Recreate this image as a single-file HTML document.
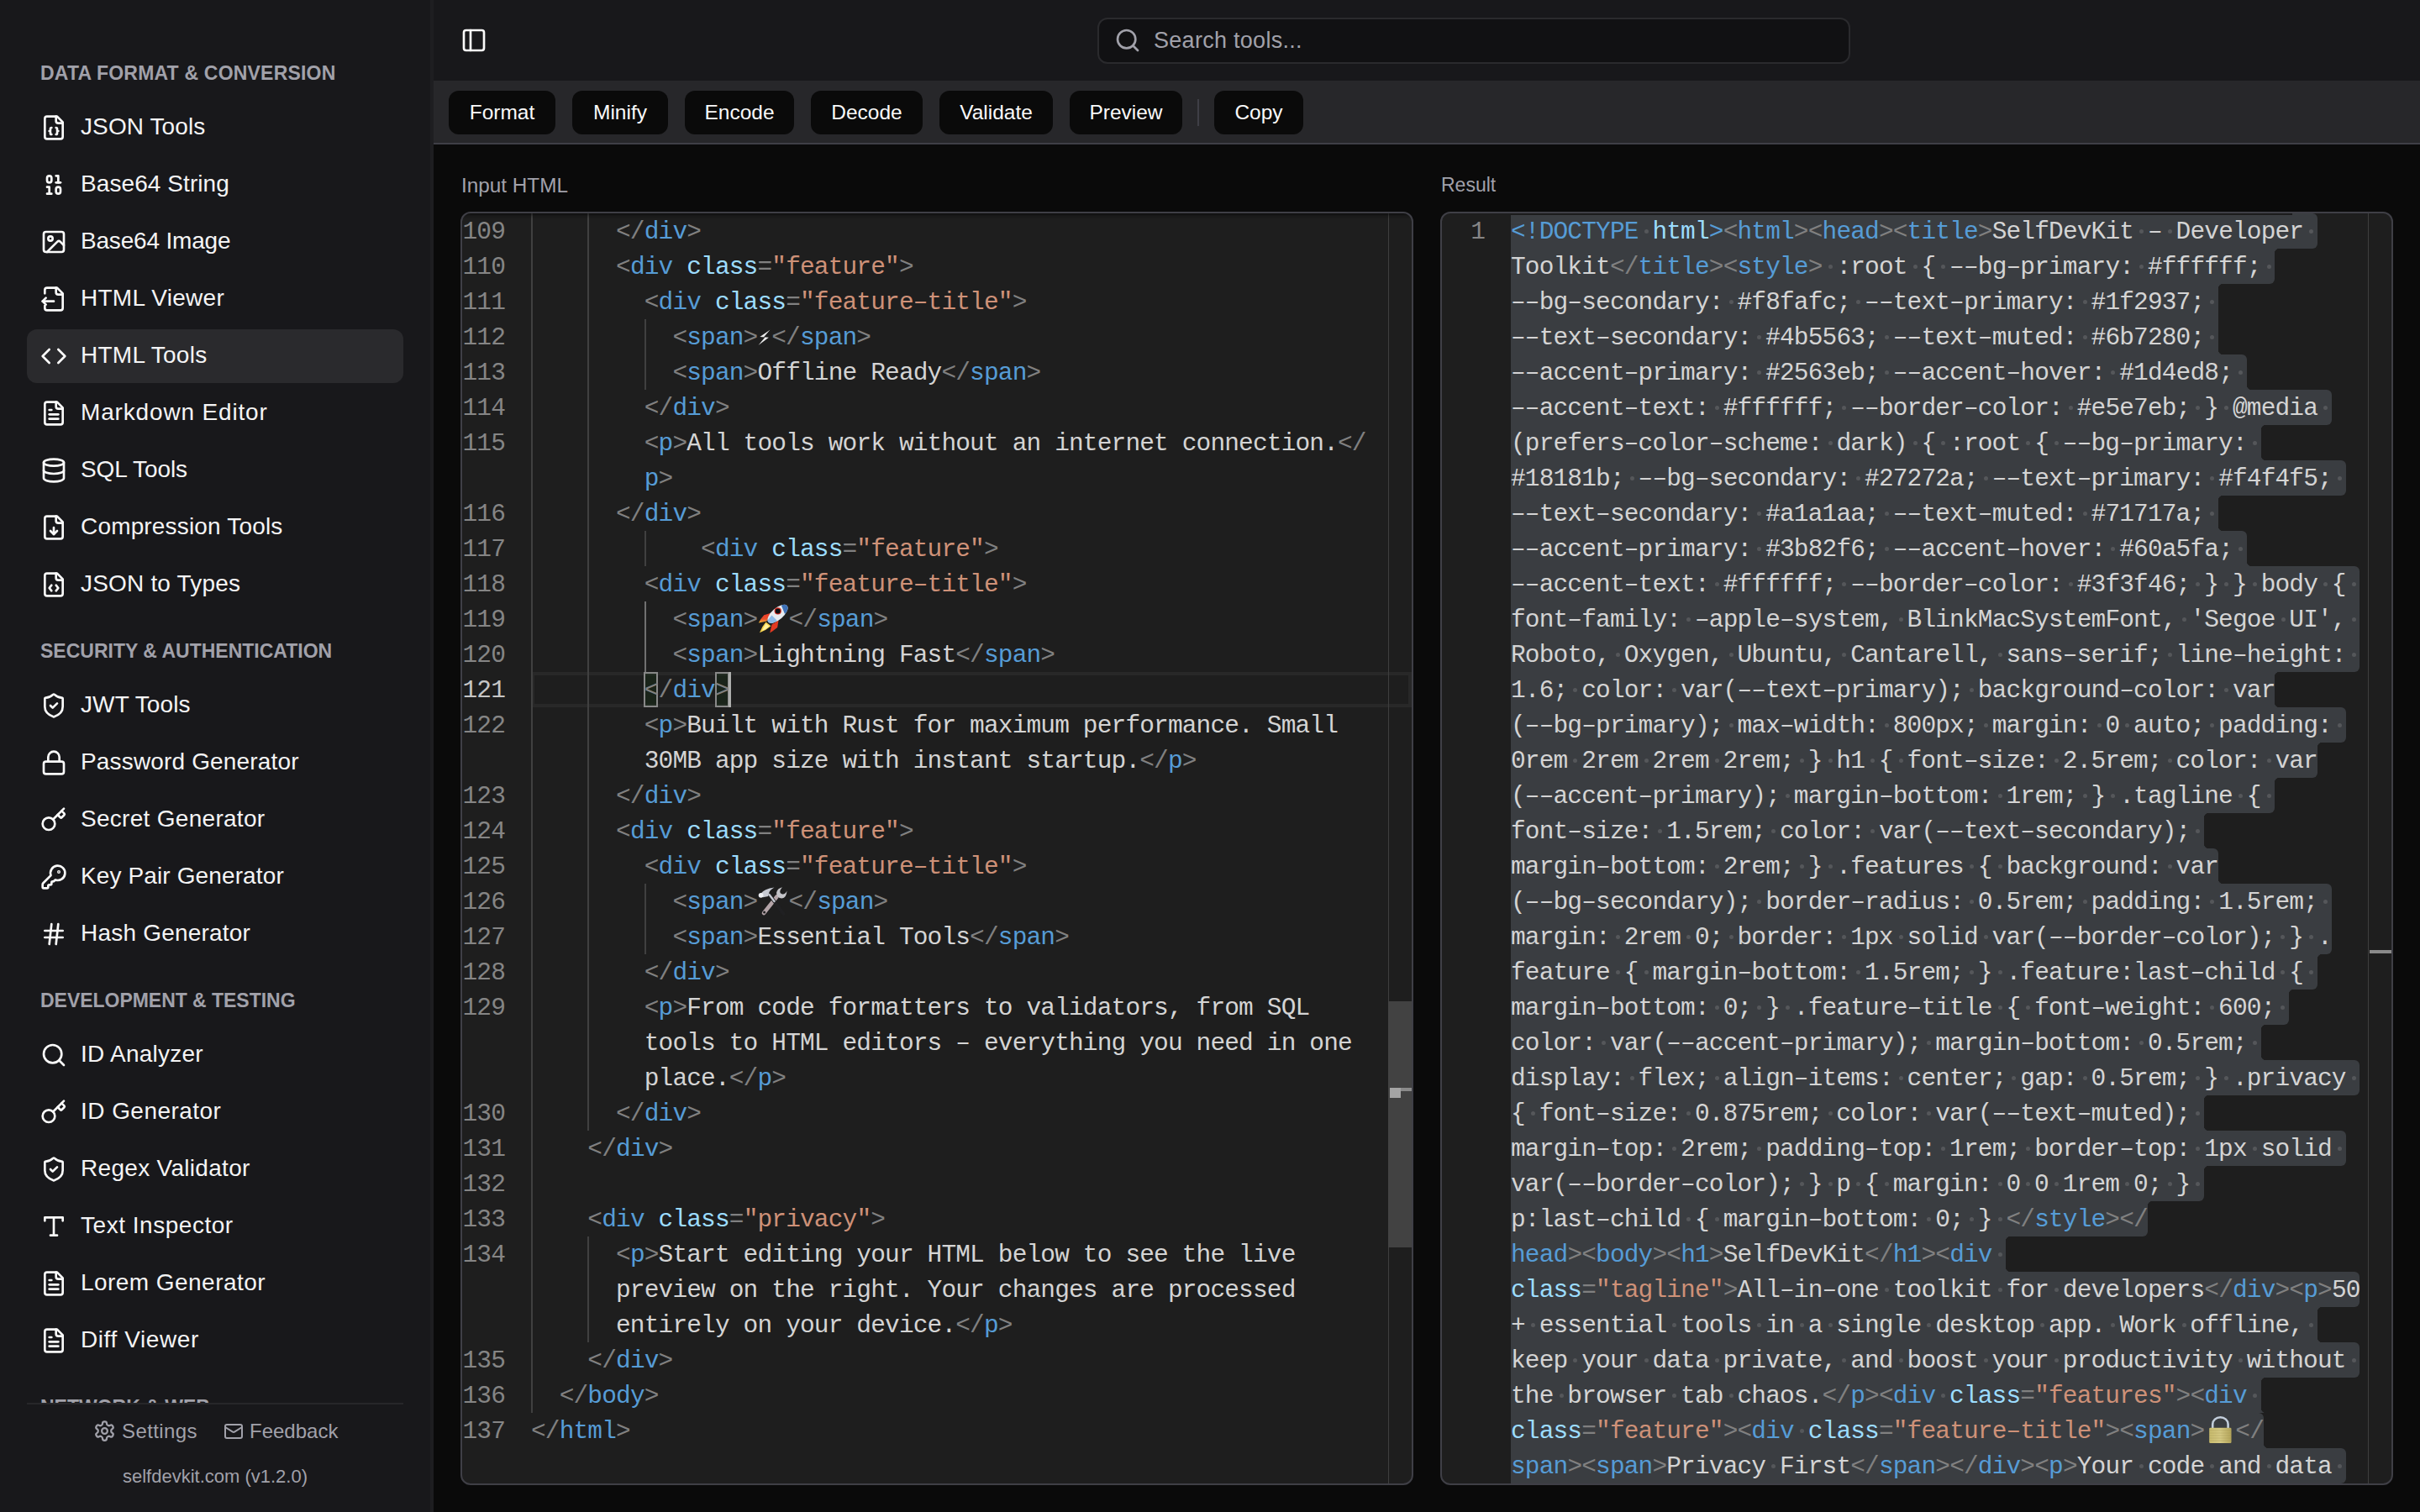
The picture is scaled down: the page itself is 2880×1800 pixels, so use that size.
<!DOCTYPE html>
<html><head><meta charset="utf-8"><title>SelfDevKit</title><style>
*{box-sizing:border-box}
html,body{margin:0;padding:0;width:2880px;height:1800px;overflow:hidden;background:#0a0a0a;font-family:"Liberation Sans",sans-serif}
.ic{position:absolute;display:block}
#sb{position:absolute;left:0;top:0;width:516px;height:1800px;background:#18181b;border-right:4px solid #1e1e21}
#sbscroll{position:absolute;left:0;top:0;width:512px;height:1670px;overflow:hidden}
#sbfoot{position:absolute;left:0;top:1670px;width:512px;height:130px}
#sbfoot:before{content:"";position:absolute;left:32px;top:0;width:448px;height:2px;background:#27272a}
.sh{position:absolute;left:48px;height:30px;line-height:30px;font-size:23px;font-weight:bold;color:#a1a1aa;letter-spacing:0.5px;white-space:nowrap}
.it{position:absolute;left:32px;width:448px;height:64px;border-radius:12px}
.it.sel{background:#2a2a2d}
.itx{position:absolute;left:96px;height:40px;line-height:40px;font-size:28px;color:#f4f4f5;white-space:nowrap}
.ft{position:absolute;height:30px;line-height:30px;font-size:24px;color:#a1a1aa;white-space:nowrap}
.ft2{position:absolute;left:0;width:512px;text-align:center;height:30px;line-height:30px;font-size:22px;color:#a1a1aa;white-space:nowrap}
#hdr{position:absolute;left:516px;top:0;width:2364px;height:96px;background:#18181b}
#search{position:absolute;left:1306px;top:21px;width:896px;height:55px;border:2px solid #2a2a2d;border-radius:12px;background:#111113}
.ph{position:absolute;left:1373px;height:36px;line-height:36px;font-size:27px;letter-spacing:0.28px;color:#a1a1aa;white-space:nowrap}
#tb{position:absolute;left:516px;top:96px;width:2364px;height:76px;background:#27272a;border-bottom:2px solid #3f3f46}
.btn{position:absolute;top:12px;height:52px;line-height:52px;border-radius:12px;background:#0a0a0a;color:#fafafa;font-size:24.5px;text-align:center;white-space:nowrap}
#sep{position:absolute;left:909px;top:22px;width:2px;height:32px;background:#3f3f46}
.label{position:absolute;height:30px;line-height:30px;font-size:24.3px;color:#a1a1aa;white-space:nowrap}
.editor{position:absolute;top:252px;width:1134px;height:1516px;background:#1e1e1e;border:2px solid #3f3f46;border-radius:12px;overflow:hidden}
.row{position:absolute;height:42px;line-height:42px;font-family:"Liberation Mono",monospace;font-size:29.5px;letter-spacing:-0.86px;white-space:pre;color:#d4d4d4}
.ln{position:absolute;left:0;width:51px;text-align:right;height:42px;line-height:42px;font-family:"Liberation Mono",monospace;font-size:29.5px;letter-spacing:-0.86px;color:#858585;white-space:pre}
.ln.cur{color:#c6c6c6}
.row .d{color:#808080}.row .k{color:#569cd6}.row .a{color:#9cdcfe}.row .s{color:#ce9178}.row .t{color:#d4d4d4}
.row .w{display:inline-block;width:16.84px;height:42px;vertical-align:top;position:relative}.row .w:after{content:"";position:absolute;left:7px;top:17.6px;width:5px;height:5px;border-radius:50%;background:#55575a}
.curline{position:absolute;left:82px;width:1048px;height:42px;border:4px solid #282828}
.guide{position:absolute;width:2px;background:#404040}
.bm{position:absolute;width:17px;height:42px;border:2px solid #888;background:rgba(0,100,0,0.1)}
.cursor{position:absolute;width:3px;height:42px;background:#aeafad}
.ovr{position:absolute;left:1102px;top:0;width:1px;height:1516px;background:#3e3e3e}
.thumb{position:absolute;left:1102px;width:28px;background:#424242}
.ovmark{position:absolute;left:1104px;width:27px;height:4px;background:#8a8a8a}.ovcur{position:absolute;left:1104px;width:13px;height:12px;background:#a4a4a4}
.ovmark2{position:absolute;left:1104px;width:27px;height:4px;background:#8a8a8a}
.scrollshadow{position:absolute;left:0;top:0;width:1130px;height:6px;box-shadow:inset 0 6px 6px -6px #000}
.selr{position:absolute;height:42px;background:#3a3d41}.fil{position:absolute;width:6px;height:6px}
.emo1{display:inline-block;width:16.84px;height:42px;vertical-align:top;position:relative}
.emo{display:inline-block;width:37px;height:42px;vertical-align:top;position:relative}
</style></head><body>
<div id="sb"><div id="sbscroll"><div class="sh" style="top:72.0px;letter-spacing:0.2px">DATA FORMAT &amp; CONVERSION</div><div class="it" style="top:120.0px"></div><svg class="ic" style="left:48px;top:136px;width:32px;height:32px" viewBox="0 0 24 24" fill="none" stroke="#fafafa" stroke-width="2" stroke-linecap="round" stroke-linejoin="round"><path d="M15 2H6a2 2 0 0 0-2 2v16a2 2 0 0 0 2 2h12a2 2 0 0 0 2-2V7Z"/><path d="M14 2v4a2 2 0 0 0 2 2h4"/><path d="M10 12a1 1 0 0 0-1 1v1a1 1 0 0 1-1 1 1 1 0 0 1 1 1v1a1 1 0 0 0 1 1"/><path d="M14 18a1 1 0 0 0 1-1v-1a1 1 0 0 1 1-1 1 1 0 0 1-1-1v-1a1 1 0 0 0-1-1"/></svg><div class="itx" style="top:130.8px;letter-spacing:0.10px">JSON Tools</div><div class="it" style="top:188.0px"></div><svg class="ic" style="left:48px;top:204px;width:32px;height:32px" viewBox="0 0 24 24" fill="none" stroke="#fafafa" stroke-width="2" stroke-linecap="round" stroke-linejoin="round"><rect x="14" y="14" width="4" height="6" rx="2"/><rect x="6" y="4" width="4" height="6" rx="2"/><path d="M6 20h4"/><path d="M14 10h4"/><path d="M6 14h2v6"/><path d="M14 4h2v6"/></svg><div class="itx" style="top:198.8px;letter-spacing:0.08px">Base64 String</div><div class="it" style="top:256.0px"></div><svg class="ic" style="left:48px;top:272px;width:32px;height:32px" viewBox="0 0 24 24" fill="none" stroke="#fafafa" stroke-width="2" stroke-linecap="round" stroke-linejoin="round"><rect width="18" height="18" x="3" y="3" rx="2" ry="2"/><circle cx="9" cy="9" r="2"/><path d="m21 15-3.086-3.086a2 2 0 0 0-2.828 0L6 21"/></svg><div class="itx" style="top:266.8px;letter-spacing:-0.19px">Base64 Image</div><div class="it" style="top:324.0px"></div><svg class="ic" style="left:48px;top:340px;width:32px;height:32px" viewBox="0 0 24 24" fill="none" stroke="#fafafa" stroke-width="2" stroke-linecap="round" stroke-linejoin="round"><path d="M14 2v4a2 2 0 0 0 2 2h4"/><path d="M4 7V4a2 2 0 0 1 2-2h9l5 5v13a2 2 0 0 1-2 2H6a2 2 0 0 1-2-2v-2"/><path d="m5 11-3 3"/><path d="m5 17-3-3h10"/></svg><div class="itx" style="top:334.8px;letter-spacing:0.27px">HTML Viewer</div><div class="it sel" style="top:392.0px"></div><svg class="ic" style="left:48px;top:408px;width:32px;height:32px" viewBox="0 0 24 24" fill="none" stroke="#fafafa" stroke-width="2" stroke-linecap="round" stroke-linejoin="round"><polyline points="16 18 22 12 16 6"/><polyline points="8 6 2 12 8 18"/></svg><div class="itx" style="top:402.8px;letter-spacing:0.26px">HTML Tools</div><div class="it" style="top:460.0px"></div><svg class="ic" style="left:48px;top:476px;width:32px;height:32px" viewBox="0 0 24 24" fill="none" stroke="#fafafa" stroke-width="2" stroke-linecap="round" stroke-linejoin="round"><path d="M15 2H6a2 2 0 0 0-2 2v16a2 2 0 0 0 2 2h12a2 2 0 0 0 2-2V7Z"/><path d="M14 2v4a2 2 0 0 0 2 2h4"/><path d="M10 9H8"/><path d="M16 13H8"/><path d="M16 17H8"/></svg><div class="itx" style="top:470.8px;letter-spacing:0.84px">Markdown Editor</div><div class="it" style="top:528.0px"></div><svg class="ic" style="left:48px;top:544px;width:32px;height:32px" viewBox="0 0 24 24" fill="none" stroke="#fafafa" stroke-width="2" stroke-linecap="round" stroke-linejoin="round"><ellipse cx="12" cy="5" rx="9" ry="3"/><path d="M3 5V19A9 3 0 0 0 21 19V5"/><path d="M3 12A9 3 0 0 0 21 12"/></svg><div class="itx" style="top:538.8px;letter-spacing:-0.07px">SQL Tools</div><div class="it" style="top:596.0px"></div><svg class="ic" style="left:48px;top:612px;width:32px;height:32px" viewBox="0 0 24 24" fill="none" stroke="#fafafa" stroke-width="2" stroke-linecap="round" stroke-linejoin="round"><path d="M15 2H6a2 2 0 0 0-2 2v16a2 2 0 0 0 2 2h12a2 2 0 0 0 2-2V7Z"/><path d="M14 2v4a2 2 0 0 0 2 2h4"/><path d="M12 18v-6"/><path d="m9 15 3 3 3-3"/></svg><div class="itx" style="top:606.8px;letter-spacing:0.17px">Compression Tools</div><div class="it" style="top:664.0px"></div><svg class="ic" style="left:48px;top:680px;width:32px;height:32px" viewBox="0 0 24 24" fill="none" stroke="#fafafa" stroke-width="2" stroke-linecap="round" stroke-linejoin="round"><path d="M10 12.5 8 15l2 2.5"/><path d="m14 12.5 2 2.5-2 2.5"/><path d="M14 2v4a2 2 0 0 0 2 2h4"/><path d="M15 2H6a2 2 0 0 0-2 2v16a2 2 0 0 0 2 2h12a2 2 0 0 0 2-2V7z"/></svg><div class="itx" style="top:674.8px;letter-spacing:0.19px">JSON to Types</div><div class="sh" style="top:760.0px;letter-spacing:0.0px">SECURITY &amp; AUTHENTICATION</div><div class="it" style="top:808.0px"></div><svg class="ic" style="left:48px;top:824px;width:32px;height:32px" viewBox="0 0 24 24" fill="none" stroke="#fafafa" stroke-width="2" stroke-linecap="round" stroke-linejoin="round"><path d="M20 13c0 5-3.5 7.5-7.66 8.95a1 1 0 0 1-.67-.01C7.5 20.5 4 18 4 13V6a1 1 0 0 1 1-1c2 0 4.5-1.2 6.24-2.72a1.17 1.17 0 0 1 1.52 0C14.51 3.81 17 5 19 5a1 1 0 0 1 1 1z"/><path d="m9 12 2 2 4-4"/></svg><div class="itx" style="top:818.8px;letter-spacing:0.10px">JWT Tools</div><div class="it" style="top:876.0px"></div><svg class="ic" style="left:48px;top:892px;width:32px;height:32px" viewBox="0 0 24 24" fill="none" stroke="#fafafa" stroke-width="2" stroke-linecap="round" stroke-linejoin="round"><rect width="18" height="11" x="3" y="11" rx="2" ry="2"/><path d="M7 11V7a5 5 0 0 1 10 0v4"/></svg><div class="itx" style="top:886.8px;letter-spacing:0.16px">Password Generator</div><div class="it" style="top:944.0px"></div><svg class="ic" style="left:48px;top:960px;width:32px;height:32px" viewBox="0 0 24 24" fill="none" stroke="#fafafa" stroke-width="2" stroke-linecap="round" stroke-linejoin="round"><path d="m15.5 7.5 2.3 2.3a1 1 0 0 0 1.4 0l2.1-2.1a1 1 0 0 0 0-1.4L19 4"/><path d="m21 2-9.6 9.6"/><circle cx="7.5" cy="15.5" r="5.5"/></svg><div class="itx" style="top:954.8px;letter-spacing:0.29px">Secret Generator</div><div class="it" style="top:1012.0px"></div><svg class="ic" style="left:48px;top:1028px;width:32px;height:32px" viewBox="0 0 24 24" fill="none" stroke="#fafafa" stroke-width="2" stroke-linecap="round" stroke-linejoin="round"><path d="M2.586 17.414A2 2 0 0 0 2 18.828V21a1 1 0 0 0 1 1h3a1 1 0 0 0 1-1v-1a1 1 0 0 1 1-1h1a1 1 0 0 0 1-1v-1a1 1 0 0 1 1-1h.172a2 2 0 0 0 1.414-.586l.814-.814a6.5 6.5 0 1 0-4-4z"/><circle cx="16.5" cy="7.5" r=".5" fill="currentColor"/></svg><div class="itx" style="top:1022.8px;letter-spacing:0.12px">Key Pair Generator</div><div class="it" style="top:1080.0px"></div><svg class="ic" style="left:48px;top:1096px;width:32px;height:32px" viewBox="0 0 24 24" fill="none" stroke="#fafafa" stroke-width="2" stroke-linecap="round" stroke-linejoin="round"><line x1="4" x2="20" y1="9" y2="9"/><line x1="4" x2="20" y1="15" y2="15"/><line x1="10" x2="8" y1="3" y2="21"/><line x1="16" x2="14" y1="3" y2="21"/></svg><div class="itx" style="top:1090.8px;letter-spacing:0.21px">Hash Generator</div><div class="sh" style="top:1176.0px;letter-spacing:-0.03px">DEVELOPMENT &amp; TESTING</div><div class="it" style="top:1224.0px"></div><svg class="ic" style="left:48px;top:1240px;width:32px;height:32px" viewBox="0 0 24 24" fill="none" stroke="#fafafa" stroke-width="2" stroke-linecap="round" stroke-linejoin="round"><circle cx="11" cy="11" r="8"/><path d="m21 21-4.3-4.3"/></svg><div class="itx" style="top:1234.8px;letter-spacing:0.25px">ID Analyzer</div><div class="it" style="top:1292.0px"></div><svg class="ic" style="left:48px;top:1308px;width:32px;height:32px" viewBox="0 0 24 24" fill="none" stroke="#fafafa" stroke-width="2" stroke-linecap="round" stroke-linejoin="round"><path d="m15.5 7.5 2.3 2.3a1 1 0 0 0 1.4 0l2.1-2.1a1 1 0 0 0 0-1.4L19 4"/><path d="m21 2-9.6 9.6"/><circle cx="7.5" cy="15.5" r="5.5"/></svg><div class="itx" style="top:1302.8px;letter-spacing:0.45px">ID Generator</div><div class="it" style="top:1360.0px"></div><svg class="ic" style="left:48px;top:1376px;width:32px;height:32px" viewBox="0 0 24 24" fill="none" stroke="#fafafa" stroke-width="2" stroke-linecap="round" stroke-linejoin="round"><path d="M20 13c0 5-3.5 7.5-7.66 8.95a1 1 0 0 1-.67-.01C7.5 20.5 4 18 4 13V6a1 1 0 0 1 1-1c2 0 4.5-1.2 6.24-2.72a1.17 1.17 0 0 1 1.52 0C14.51 3.81 17 5 19 5a1 1 0 0 1 1 1z"/><path d="m9 12 2 2 4-4"/></svg><div class="itx" style="top:1370.8px;letter-spacing:0.30px">Regex Validator</div><div class="it" style="top:1428.0px"></div><svg class="ic" style="left:48px;top:1444px;width:32px;height:32px" viewBox="0 0 24 24" fill="none" stroke="#fafafa" stroke-width="2" stroke-linecap="round" stroke-linejoin="round"><polyline points="4 7 4 4 20 4 20 7"/><line x1="9" x2="15" y1="20" y2="20"/><line x1="12" x2="12" y1="4" y2="20"/></svg><div class="itx" style="top:1438.8px;letter-spacing:0.53px">Text Inspector</div><div class="it" style="top:1496.0px"></div><svg class="ic" style="left:48px;top:1512px;width:32px;height:32px" viewBox="0 0 24 24" fill="none" stroke="#fafafa" stroke-width="2" stroke-linecap="round" stroke-linejoin="round"><path d="M15 2H6a2 2 0 0 0-2 2v16a2 2 0 0 0 2 2h12a2 2 0 0 0 2-2V7Z"/><path d="M14 2v4a2 2 0 0 0 2 2h4"/><path d="M10 9H8"/><path d="M16 13H8"/><path d="M16 17H8"/></svg><div class="itx" style="top:1506.8px;letter-spacing:0.45px">Lorem Generator</div><div class="it" style="top:1564.0px"></div><svg class="ic" style="left:48px;top:1580px;width:32px;height:32px" viewBox="0 0 24 24" fill="none" stroke="#fafafa" stroke-width="2" stroke-linecap="round" stroke-linejoin="round"><path d="M15 2H6a2 2 0 0 0-2 2v16a2 2 0 0 0 2 2h12a2 2 0 0 0 2-2V7Z"/><path d="M14 2v4a2 2 0 0 0 2 2h4"/><path d="M10 9H8"/><path d="M16 13H8"/><path d="M16 17H8"/></svg><div class="itx" style="top:1574.8px;letter-spacing:0.59px">Diff Viewer</div><div class="sh" style="top:1660.0px;letter-spacing:0px">NETWORK &amp; WEB</div></div><div id="sbfoot"><svg class="ic" style="left:110.5px;top:19.5px;width:27px;height:27px" viewBox="0 0 24 24" fill="none" stroke="#a1a1aa" stroke-width="2" stroke-linecap="round" stroke-linejoin="round"><path d="M12.22 2h-.44a2 2 0 0 0-2 2v.18a2 2 0 0 1-1 1.73l-.43.25a2 2 0 0 1-2 0l-.15-.08a2 2 0 0 0-2.73.73l-.22.38a2 2 0 0 0 .73 2.73l.15.1a2 2 0 0 1 1 1.72v.51a2 2 0 0 1-1 1.74l-.15.09a2 2 0 0 0-.73 2.73l.22.38a2 2 0 0 0 2.730.73l.15-.08a2 2 0 0 1 2 0l.43.25a2 2 0 0 1 1 1.73V20a2 2 0 0 0 2 2h.44a2 2 0 0 0 2-2v-.18a2 2 0 0 1 1-1.73l.43-.25a2 2 0 0 1 2 0l.15.08a2 2 0 0 0 2.73-.73l.22-.39a2 2 0 0 0-.73-2.73l-.15-.08a2 2 0 0 1-1-1.74v-.5a2 2 0 0 1 1-1.74l.15-.09a2 2 0 0 0 .73-2.73l-.22-.38a2 2 0 0 0-2.73-.73l-.15.08a2 2 0 0 1-2 0l-.43-.25a2 2 0 0 1-1-1.73V4a2 2 0 0 0-2-2z"/><circle cx="12" cy="12" r="3"/></svg><div class="ft" style="left:145px;top:18.9px;letter-spacing:0.4px">Settings</div><svg class="ic" style="left:266px;top:22px;width:24px;height:24px" viewBox="0 0 24 24" fill="none" stroke="#a1a1aa" stroke-width="2" stroke-linecap="round" stroke-linejoin="round"><rect width="20" height="16" x="2" y="4" rx="2"/><path d="m22 7-8.97 5.7a1.94 1.94 0 0 1-2.06 0L2 7"/></svg><div class="ft" style="left:297px;top:18.9px">Feedback</div><div class="ft2" style="top:73.2px">selfdevkit.com (v1.2.0)</div></div></div>
<div id="hdr"></div>
<div id="tb"><div class="btn" style="left:18px;width:127px">Format</div><div class="btn" style="left:165px;width:114px">Minify</div><div class="btn" style="left:299px;width:130px">Encode</div><div class="btn" style="left:449px;width:133px">Decode</div><div class="btn" style="left:602px;width:135px">Validate</div><div class="btn" style="left:757px;width:134px">Preview</div><div class="btn" style="left:929px;width:106px">Copy</div><div id="sep"></div></div>
<svg class="ic" style="left:548px;top:32px;width:32px;height:32px" viewBox="0 0 24 24" fill="none" stroke="#fafafa" stroke-width="2" stroke-linecap="round" stroke-linejoin="round"><rect width="18" height="18" x="3" y="3" rx="2"/><path d="M9 3v18"/></svg><div id="search"></div><svg class="ic" style="left:1326px;top:32px;width:32px;height:32px" viewBox="0 0 24 24" fill="none" stroke="#a1a1aa" stroke-width="2" stroke-linecap="round" stroke-linejoin="round"><circle cx="11" cy="11" r="8"/><path d="m21 21-4.3-4.3"/></svg><div class="ph" style="top:29.6px">Search tools...</div>
<div id="main"><div class="label" style="left:549px;top:205.7px">Input HTML</div><div class="editor" style="left:548px"><div class="curline" style="top:546px"></div><div class="guide" style="left:82.0px;top:0px;height:1428px"></div><div class="guide" style="left:149.4px;top:0px;height:1092px"></div><div class="guide" style="left:149.4px;top:1218px;height:126px"></div><div class="guide" style="left:216.7px;top:126px;height:84px"></div><div class="guide" style="left:216.7px;top:378px;height:42px"></div><div class="guide" style="left:216.7px;top:462px;height:84px;background:#707070"></div><div class="guide" style="left:216.7px;top:798px;height:84px"></div><div class="bm" style="left:215.7px;top:546px"></div><div class="bm" style="left:300.9px;top:546px"></div><div class="ln" style="top:1px">109</div><div class="row" style="top:1px;left:183.04px"><span class="d">&lt;/</span><span class="k">div</span><span class="d">&gt;</span></div><div class="ln" style="top:43px">110</div><div class="row" style="top:43px;left:183.04px"><span class="d">&lt;</span><span class="k">div</span><span class="t"> </span><span class="a">class</span><span class="d">=</span><span class="s">"feature"</span><span class="d">&gt;</span></div><div class="ln" style="top:85px">111</div><div class="row" style="top:85px;left:216.72px"><span class="d">&lt;</span><span class="k">div</span><span class="t"> </span><span class="a">class</span><span class="d">=</span><span class="s">"feature–title"</span><span class="d">&gt;</span></div><div class="ln" style="top:127px">112</div><div class="row" style="top:127px;left:250.40px"><span class="d">&lt;</span><span class="k">span</span><span class="d">&gt;</span><span class="t"><span class="emo1"><svg width="17" height="42" viewBox="0 0 17 42" style="position:absolute;left:0;top:0"><path d="M15.3 11.8 L3.3 19.9 L9.4 20.4 L1.5 29.9 L13.9 20.8 L8.0 20.3 Z" fill="#ececec"/></svg></span></span><span class="d">&lt;/</span><span class="k">span</span><span class="d">&gt;</span></div><div class="ln" style="top:169px">113</div><div class="row" style="top:169px;left:250.40px"><span class="d">&lt;</span><span class="k">span</span><span class="d">&gt;</span><span class="t">Offline Ready</span><span class="d">&lt;/</span><span class="k">span</span><span class="d">&gt;</span></div><div class="ln" style="top:211px">114</div><div class="row" style="top:211px;left:216.72px"><span class="d">&lt;/</span><span class="k">div</span><span class="d">&gt;</span></div><div class="ln" style="top:253px">115</div><div class="row" style="top:253px;left:216.72px"><span class="d">&lt;</span><span class="k">p</span><span class="d">&gt;</span><span class="t">All tools work without an internet connection.</span><span class="d">&lt;/</span></div><div class="row" style="top:295px;left:216.72px"><span class="k">p</span><span class="d">&gt;</span></div><div class="ln" style="top:337px">116</div><div class="row" style="top:337px;left:183.04px"><span class="d">&lt;/</span><span class="k">div</span><span class="d">&gt;</span></div><div class="ln" style="top:379px">117</div><div class="row" style="top:379px;left:284.08px"><span class="d">&lt;</span><span class="k">div</span><span class="t"> </span><span class="a">class</span><span class="d">=</span><span class="s">"feature"</span><span class="d">&gt;</span></div><div class="ln" style="top:421px">118</div><div class="row" style="top:421px;left:216.72px"><span class="d">&lt;</span><span class="k">div</span><span class="t"> </span><span class="a">class</span><span class="d">=</span><span class="s">"feature–title"</span><span class="d">&gt;</span></div><div class="ln" style="top:463px">119</div><div class="row" style="top:463px;left:250.40px"><span class="d">&lt;</span><span class="k">span</span><span class="d">&gt;</span><span class="t"><span class="emo"><svg width="37" height="42" viewBox="0 0 37 42" style="position:absolute;left:0;top:0"><defs><clipPath id="rb"><ellipse cx="24.5" cy="13.8" rx="14.8" ry="6.9" transform="rotate(-41 24.5 13.8)"/></clipPath><linearGradient id="rf" x1="0" y1="0" x2="0" y2="1"><stop offset="0" stop-color="#f0382a"/><stop offset="0.6" stop-color="#e8502a"/><stop offset="1" stop-color="#f5c33a"/></linearGradient></defs><path d="M16.5 12.8 L8.2 15.2 Q4.2 19.5 1.8 24.6 L11.5 22.5 Z" fill="url(#rf)"/><path d="M25.5 21.5 L24.2 30 Q19.5 33.8 15.2 36.5 L17.5 26.5 Z" fill="#e23a22"/><path d="M10.5 23.5 Q5.5 29 3 36.2 Q10.5 33.5 16.5 28.2 Z" fill="#f6d24a"/><path d="M10.5 25.5 Q7.5 30 6 34 Q11 32 14.5 28.5 Z" fill="#fff3a0"/><g clip-path="url(#rb)"><rect x="0" y="0" width="37" height="42" fill="#e6ebf0"/><path d="M5 30 L17.5 15.5 L23.5 21.5 L11 36 Z" fill="#8dbbe8"/><path d="M32 0 L40 8 L33 14 L29 4 Z" fill="#3f72b8"/></g><circle cx="24.7" cy="10.4" r="4.1" fill="#d4291c"/><circle cx="24.7" cy="10.4" r="3" fill="#0c1014"/></svg></span></span><span class="d">&lt;/</span><span class="k">span</span><span class="d">&gt;</span></div><div class="ln" style="top:505px">120</div><div class="row" style="top:505px;left:250.40px"><span class="d">&lt;</span><span class="k">span</span><span class="d">&gt;</span><span class="t">Lightning Fast</span><span class="d">&lt;/</span><span class="k">span</span><span class="d">&gt;</span></div><div class="ln cur" style="top:547px">121</div><div class="row" style="top:547px;left:216.72px"><span class="d">&lt;/</span><span class="k">div</span><span class="d">&gt;</span></div><div class="ln" style="top:589px">122</div><div class="row" style="top:589px;left:216.72px"><span class="d">&lt;</span><span class="k">p</span><span class="d">&gt;</span><span class="t">Built with Rust for maximum performance. Small </span></div><div class="row" style="top:631px;left:216.72px"><span class="t">30MB app size with instant startup.</span><span class="d">&lt;/</span><span class="k">p</span><span class="d">&gt;</span></div><div class="ln" style="top:673px">123</div><div class="row" style="top:673px;left:183.04px"><span class="d">&lt;/</span><span class="k">div</span><span class="d">&gt;</span></div><div class="ln" style="top:715px">124</div><div class="row" style="top:715px;left:183.04px"><span class="d">&lt;</span><span class="k">div</span><span class="t"> </span><span class="a">class</span><span class="d">=</span><span class="s">"feature"</span><span class="d">&gt;</span></div><div class="ln" style="top:757px">125</div><div class="row" style="top:757px;left:216.72px"><span class="d">&lt;</span><span class="k">div</span><span class="t"> </span><span class="a">class</span><span class="d">=</span><span class="s">"feature–title"</span><span class="d">&gt;</span></div><div class="ln" style="top:799px">126</div><div class="row" style="top:799px;left:250.40px"><span class="d">&lt;</span><span class="k">span</span><span class="d">&gt;</span><span class="t"><span class="emo"><svg width="37" height="42" viewBox="0 0 37 42" style="position:absolute;left:0;top:0"><path d="M23.5 14.5 L8 34" stroke="#b4a4a8" stroke-width="4.6" stroke-linecap="round"/><circle cx="8.6" cy="33" r="1.5" fill="#1e1e1e"/><path d="M14.5 12 L31.5 35" stroke="#202022" stroke-width="4" stroke-linecap="round"/><path d="M14.5 12 L20.5 20" stroke="#c4c8d0" stroke-width="2.4" stroke-linecap="round"/><path d="M30 3.2 Q24 4.5 23 10 Q23.5 16 29.5 16.5 Q35 16 35.5 7.6 Q33.5 12 30 11.5 Q26.5 10.5 27.5 7 Q28.5 5 30 3.2 Z" fill="#c4c4c8"/><path d="M3.5 11.5 Q8.5 5 20.5 3.6 Q14.5 6.8 14 10.8 L13.2 14 L7 15.2 Z" fill="#c6c9d2"/><circle cx="4.6" cy="12.8" r="2.9" fill="#eef0f4"/></svg></span></span><span class="d">&lt;/</span><span class="k">span</span><span class="d">&gt;</span></div><div class="ln" style="top:841px">127</div><div class="row" style="top:841px;left:250.40px"><span class="d">&lt;</span><span class="k">span</span><span class="d">&gt;</span><span class="t">Essential Tools</span><span class="d">&lt;/</span><span class="k">span</span><span class="d">&gt;</span></div><div class="ln" style="top:883px">128</div><div class="row" style="top:883px;left:216.72px"><span class="d">&lt;/</span><span class="k">div</span><span class="d">&gt;</span></div><div class="ln" style="top:925px">129</div><div class="row" style="top:925px;left:216.72px"><span class="d">&lt;</span><span class="k">p</span><span class="d">&gt;</span><span class="t">From code formatters to validators, from SQL </span></div><div class="row" style="top:967px;left:216.72px"><span class="t">tools to HTML editors – everything you need in one </span></div><div class="row" style="top:1009px;left:216.72px"><span class="t">place.</span><span class="d">&lt;/</span><span class="k">p</span><span class="d">&gt;</span></div><div class="ln" style="top:1051px">130</div><div class="row" style="top:1051px;left:183.04px"><span class="d">&lt;/</span><span class="k">div</span><span class="d">&gt;</span></div><div class="ln" style="top:1093px">131</div><div class="row" style="top:1093px;left:149.36px"><span class="d">&lt;/</span><span class="k">div</span><span class="d">&gt;</span></div><div class="ln" style="top:1135px">132</div><div class="row" style="top:1135px;left:82.00px"></div><div class="ln" style="top:1177px">133</div><div class="row" style="top:1177px;left:149.36px"><span class="d">&lt;</span><span class="k">div</span><span class="t"> </span><span class="a">class</span><span class="d">=</span><span class="s">"privacy"</span><span class="d">&gt;</span></div><div class="ln" style="top:1219px">134</div><div class="row" style="top:1219px;left:183.04px"><span class="d">&lt;</span><span class="k">p</span><span class="d">&gt;</span><span class="t">Start editing your HTML below to see the live </span></div><div class="row" style="top:1261px;left:183.04px"><span class="t">preview on the right. Your changes are processed </span></div><div class="row" style="top:1303px;left:183.04px"><span class="t">entirely on your device.</span><span class="d">&lt;/</span><span class="k">p</span><span class="d">&gt;</span></div><div class="ln" style="top:1345px">135</div><div class="row" style="top:1345px;left:149.36px"><span class="d">&lt;/</span><span class="k">div</span><span class="d">&gt;</span></div><div class="ln" style="top:1387px">136</div><div class="row" style="top:1387px;left:115.68px"><span class="d">&lt;/</span><span class="k">body</span><span class="d">&gt;</span></div><div class="ln" style="top:1429px">137</div><div class="row" style="top:1429px;left:82.00px"><span class="d">&lt;/</span><span class="k">html</span><span class="d">&gt;</span></div><div class="cursor" style="left:316.8px;top:546px"></div><div class="ovr"></div><div class="scrollshadow"></div><div class="thumb" style="top:938px;height:293px"></div><div class="ovmark" style="top:1041px"></div><div class="ovcur" style="top:1041px"></div></div><div class="label" style="left:1715px;top:204.7px;font-size:23px">Result</div><div class="editor" style="left:1714px"><div class="selr" style="top:0px;left:82px;width:959.9px;border-radius:0 6px 6px 0"></div><div class="selr" style="top:42px;left:82px;width:909.4px;border-radius:0 0px 6px 0"></div><div class="selr" style="top:84px;left:82px;width:842.0px;border-radius:0 0px 0px 0"></div><div class="selr" style="top:126px;left:82px;width:842.0px;border-radius:0 0px 0px 0"></div><div class="selr" style="top:168px;left:82px;width:875.7px;border-radius:0 6px 0px 0"></div><div class="selr" style="top:210px;left:82px;width:976.7px;border-radius:0 6px 6px 0"></div><div class="selr" style="top:252px;left:82px;width:892.5px;border-radius:0 0px 0px 0"></div><div class="selr" style="top:294px;left:82px;width:993.6px;border-radius:0 6px 6px 0"></div><div class="selr" style="top:336px;left:82px;width:842.0px;border-radius:0 0px 0px 0"></div><div class="selr" style="top:378px;left:82px;width:875.7px;border-radius:0 6px 0px 0"></div><div class="selr" style="top:420px;left:82px;width:1010.4px;border-radius:0 6px 0px 0"></div><div class="selr" style="top:462px;left:82px;width:1010.4px;border-radius:0 0px 0px 0"></div><div class="selr" style="top:504px;left:82px;width:1010.4px;border-radius:0 0px 6px 0"></div><div class="selr" style="top:546px;left:82px;width:909.4px;border-radius:0 0px 0px 0"></div><div class="selr" style="top:588px;left:82px;width:993.6px;border-radius:0 6px 6px 0"></div><div class="selr" style="top:630px;left:82px;width:959.9px;border-radius:0 0px 6px 0"></div><div class="selr" style="top:672px;left:82px;width:909.4px;border-radius:0 0px 6px 0"></div><div class="selr" style="top:714px;left:82px;width:825.2px;border-radius:0 0px 0px 0"></div><div class="selr" style="top:756px;left:82px;width:842.0px;border-radius:0 6px 0px 0"></div><div class="selr" style="top:798px;left:82px;width:976.7px;border-radius:0 6px 0px 0"></div><div class="selr" style="top:840px;left:82px;width:976.7px;border-radius:0 0px 6px 0"></div><div class="selr" style="top:882px;left:82px;width:959.9px;border-radius:0 0px 6px 0"></div><div class="selr" style="top:924px;left:82px;width:926.2px;border-radius:0 0px 6px 0"></div><div class="selr" style="top:966px;left:82px;width:892.5px;border-radius:0 0px 0px 0"></div><div class="selr" style="top:1008px;left:82px;width:1010.4px;border-radius:0 6px 6px 0"></div><div class="selr" style="top:1050px;left:82px;width:825.2px;border-radius:0 0px 0px 0"></div><div class="selr" style="top:1092px;left:82px;width:993.6px;border-radius:0 6px 6px 0"></div><div class="selr" style="top:1134px;left:82px;width:825.2px;border-radius:0 0px 6px 0"></div><div class="selr" style="top:1176px;left:82px;width:757.8px;border-radius:0 0px 6px 0"></div><div class="selr" style="top:1218px;left:82px;width:589.4px;border-radius:0 0px 0px 0"></div><div class="selr" style="top:1260px;left:82px;width:1010.4px;border-radius:0 6px 6px 0"></div><div class="selr" style="top:1302px;left:82px;width:959.9px;border-radius:0 0px 0px 0"></div><div class="selr" style="top:1344px;left:82px;width:1010.4px;border-radius:0 6px 6px 0"></div><div class="selr" style="top:1386px;left:82px;width:892.5px;border-radius:0 0px 0px 0"></div><div class="selr" style="top:1428px;left:82px;width:895.8px;border-radius:0 6px 0px 0"></div><div class="selr" style="top:1470px;left:82px;width:993.6px;border-radius:0 6px 6px 0"></div><div class="fil" style="left:991.4px;top:42px;background:radial-gradient(circle at 100% 100%, rgba(58,61,65,0) 6px, #3a3d41 6.6px)"></div><div class="fil" style="left:924.0px;top:84px;background:radial-gradient(circle at 100% 100%, rgba(58,61,65,0) 6px, #3a3d41 6.6px)"></div><div class="fil" style="left:924.0px;top:162px;background:radial-gradient(circle at 100% 0%, rgba(58,61,65,0) 6px, #3a3d41 6.6px)"></div><div class="fil" style="left:957.7px;top:204px;background:radial-gradient(circle at 100% 0%, rgba(58,61,65,0) 6px, #3a3d41 6.6px)"></div><div class="fil" style="left:974.5px;top:252px;background:radial-gradient(circle at 100% 100%, rgba(58,61,65,0) 6px, #3a3d41 6.6px)"></div><div class="fil" style="left:974.5px;top:288px;background:radial-gradient(circle at 100% 0%, rgba(58,61,65,0) 6px, #3a3d41 6.6px)"></div><div class="fil" style="left:924.0px;top:336px;background:radial-gradient(circle at 100% 100%, rgba(58,61,65,0) 6px, #3a3d41 6.6px)"></div><div class="fil" style="left:924.0px;top:372px;background:radial-gradient(circle at 100% 0%, rgba(58,61,65,0) 6px, #3a3d41 6.6px)"></div><div class="fil" style="left:957.7px;top:414px;background:radial-gradient(circle at 100% 0%, rgba(58,61,65,0) 6px, #3a3d41 6.6px)"></div><div class="fil" style="left:991.4px;top:546px;background:radial-gradient(circle at 100% 100%, rgba(58,61,65,0) 6px, #3a3d41 6.6px)"></div><div class="fil" style="left:991.4px;top:582px;background:radial-gradient(circle at 100% 0%, rgba(58,61,65,0) 6px, #3a3d41 6.6px)"></div><div class="fil" style="left:1041.9px;top:630px;background:radial-gradient(circle at 100% 100%, rgba(58,61,65,0) 6px, #3a3d41 6.6px)"></div><div class="fil" style="left:991.4px;top:672px;background:radial-gradient(circle at 100% 100%, rgba(58,61,65,0) 6px, #3a3d41 6.6px)"></div><div class="fil" style="left:907.2px;top:714px;background:radial-gradient(circle at 100% 100%, rgba(58,61,65,0) 6px, #3a3d41 6.6px)"></div><div class="fil" style="left:907.2px;top:750px;background:radial-gradient(circle at 100% 0%, rgba(58,61,65,0) 6px, #3a3d41 6.6px)"></div><div class="fil" style="left:924.0px;top:792px;background:radial-gradient(circle at 100% 0%, rgba(58,61,65,0) 6px, #3a3d41 6.6px)"></div><div class="fil" style="left:1041.9px;top:882px;background:radial-gradient(circle at 100% 100%, rgba(58,61,65,0) 6px, #3a3d41 6.6px)"></div><div class="fil" style="left:1008.2px;top:924px;background:radial-gradient(circle at 100% 100%, rgba(58,61,65,0) 6px, #3a3d41 6.6px)"></div><div class="fil" style="left:974.5px;top:966px;background:radial-gradient(circle at 100% 100%, rgba(58,61,65,0) 6px, #3a3d41 6.6px)"></div><div class="fil" style="left:974.5px;top:1002px;background:radial-gradient(circle at 100% 0%, rgba(58,61,65,0) 6px, #3a3d41 6.6px)"></div><div class="fil" style="left:907.2px;top:1050px;background:radial-gradient(circle at 100% 100%, rgba(58,61,65,0) 6px, #3a3d41 6.6px)"></div><div class="fil" style="left:907.2px;top:1086px;background:radial-gradient(circle at 100% 0%, rgba(58,61,65,0) 6px, #3a3d41 6.6px)"></div><div class="fil" style="left:907.2px;top:1134px;background:radial-gradient(circle at 100% 100%, rgba(58,61,65,0) 6px, #3a3d41 6.6px)"></div><div class="fil" style="left:839.8px;top:1176px;background:radial-gradient(circle at 100% 100%, rgba(58,61,65,0) 6px, #3a3d41 6.6px)"></div><div class="fil" style="left:671.4px;top:1218px;background:radial-gradient(circle at 100% 100%, rgba(58,61,65,0) 6px, #3a3d41 6.6px)"></div><div class="fil" style="left:671.4px;top:1254px;background:radial-gradient(circle at 100% 0%, rgba(58,61,65,0) 6px, #3a3d41 6.6px)"></div><div class="fil" style="left:1041.9px;top:1302px;background:radial-gradient(circle at 100% 100%, rgba(58,61,65,0) 6px, #3a3d41 6.6px)"></div><div class="fil" style="left:1041.9px;top:1338px;background:radial-gradient(circle at 100% 0%, rgba(58,61,65,0) 6px, #3a3d41 6.6px)"></div><div class="fil" style="left:974.5px;top:1386px;background:radial-gradient(circle at 100% 100%, rgba(58,61,65,0) 6px, #3a3d41 6.6px)"></div><div class="fil" style="left:974.5px;top:1422px;background:radial-gradient(circle at 100% 0%, rgba(58,61,65,0) 6px, #3a3d41 6.6px)"></div><div class="fil" style="left:977.8px;top:1464px;background:radial-gradient(circle at 100% 0%, rgba(58,61,65,0) 6px, #3a3d41 6.6px)"></div><div style="position:absolute;left:82px;top:0;width:930px;height:2px;background:#1c1c1d"></div><div class="ln" style="top:1px">1</div><div class="row" style="top:1px;left:82px"><span class="k">&lt;!DOCTYPE</span><span class="w"></span><span class="a">html</span><span class="k">&gt;</span><span class="d">&lt;</span><span class="k">html</span><span class="d">&gt;</span><span class="d">&lt;</span><span class="k">head</span><span class="d">&gt;</span><span class="d">&lt;</span><span class="k">title</span><span class="d">&gt;</span><span class="t">SelfDevKit</span><span class="w"></span><span class="t">–</span><span class="w"></span><span class="t">Developer</span><span class="w"></span></div><div class="row" style="top:43px;left:82px"><span class="t">Toolkit</span><span class="d">&lt;/</span><span class="k">title</span><span class="d">&gt;</span><span class="d">&lt;</span><span class="k">style</span><span class="d">&gt;</span><span class="w"></span><span class="t">:root</span><span class="w"></span><span class="t">{</span><span class="w"></span><span class="t">––bg–primary:</span><span class="w"></span><span class="t">#ffffff;</span><span class="w"></span></div><div class="row" style="top:85px;left:82px"><span class="t">––bg–secondary:</span><span class="w"></span><span class="t">#f8fafc;</span><span class="w"></span><span class="t">––text–primary:</span><span class="w"></span><span class="t">#1f2937;</span><span class="w"></span></div><div class="row" style="top:127px;left:82px"><span class="t">––text–secondary:</span><span class="w"></span><span class="t">#4b5563;</span><span class="w"></span><span class="t">––text–muted:</span><span class="w"></span><span class="t">#6b7280;</span><span class="w"></span></div><div class="row" style="top:169px;left:82px"><span class="t">––accent–primary:</span><span class="w"></span><span class="t">#2563eb;</span><span class="w"></span><span class="t">––accent–hover:</span><span class="w"></span><span class="t">#1d4ed8;</span><span class="w"></span></div><div class="row" style="top:211px;left:82px"><span class="t">––accent–text:</span><span class="w"></span><span class="t">#ffffff;</span><span class="w"></span><span class="t">––border–color:</span><span class="w"></span><span class="t">#e5e7eb;</span><span class="w"></span><span class="t">}</span><span class="w"></span><span class="t">@media</span><span class="w"></span></div><div class="row" style="top:253px;left:82px"><span class="t">(prefers–color–scheme:</span><span class="w"></span><span class="t">dark)</span><span class="w"></span><span class="t">{</span><span class="w"></span><span class="t">:root</span><span class="w"></span><span class="t">{</span><span class="w"></span><span class="t">––bg–primary:</span><span class="w"></span></div><div class="row" style="top:295px;left:82px"><span class="t">#18181b;</span><span class="w"></span><span class="t">––bg–secondary:</span><span class="w"></span><span class="t">#27272a;</span><span class="w"></span><span class="t">––text–primary:</span><span class="w"></span><span class="t">#f4f4f5;</span><span class="w"></span></div><div class="row" style="top:337px;left:82px"><span class="t">––text–secondary:</span><span class="w"></span><span class="t">#a1a1aa;</span><span class="w"></span><span class="t">––text–muted:</span><span class="w"></span><span class="t">#71717a;</span><span class="w"></span></div><div class="row" style="top:379px;left:82px"><span class="t">––accent–primary:</span><span class="w"></span><span class="t">#3b82f6;</span><span class="w"></span><span class="t">––accent–hover:</span><span class="w"></span><span class="t">#60a5fa;</span><span class="w"></span></div><div class="row" style="top:421px;left:82px"><span class="t">––accent–text:</span><span class="w"></span><span class="t">#ffffff;</span><span class="w"></span><span class="t">––border–color:</span><span class="w"></span><span class="t">#3f3f46;</span><span class="w"></span><span class="t">}</span><span class="w"></span><span class="t">}</span><span class="w"></span><span class="t">body</span><span class="w"></span><span class="t">{</span><span class="w"></span></div><div class="row" style="top:463px;left:82px"><span class="t">font–family:</span><span class="w"></span><span class="t">–apple–system,</span><span class="w"></span><span class="t">BlinkMacSystemFont,</span><span class="w"></span><span class="t">'Segoe</span><span class="w"></span><span class="t">UI',</span><span class="w"></span></div><div class="row" style="top:505px;left:82px"><span class="t">Roboto,</span><span class="w"></span><span class="t">Oxygen,</span><span class="w"></span><span class="t">Ubuntu,</span><span class="w"></span><span class="t">Cantarell,</span><span class="w"></span><span class="t">sans–serif;</span><span class="w"></span><span class="t">line–height:</span><span class="w"></span></div><div class="row" style="top:547px;left:82px"><span class="t">1.6;</span><span class="w"></span><span class="t">color:</span><span class="w"></span><span class="t">var(––text–primary);</span><span class="w"></span><span class="t">background–color:</span><span class="w"></span><span class="t">var</span></div><div class="row" style="top:589px;left:82px"><span class="t">(––bg–primary);</span><span class="w"></span><span class="t">max–width:</span><span class="w"></span><span class="t">800px;</span><span class="w"></span><span class="t">margin:</span><span class="w"></span><span class="t">0</span><span class="w"></span><span class="t">auto;</span><span class="w"></span><span class="t">padding:</span><span class="w"></span></div><div class="row" style="top:631px;left:82px"><span class="t">0rem</span><span class="w"></span><span class="t">2rem</span><span class="w"></span><span class="t">2rem</span><span class="w"></span><span class="t">2rem;</span><span class="w"></span><span class="t">}</span><span class="w"></span><span class="t">h1</span><span class="w"></span><span class="t">{</span><span class="w"></span><span class="t">font–size:</span><span class="w"></span><span class="t">2.5rem;</span><span class="w"></span><span class="t">color:</span><span class="w"></span><span class="t">var</span></div><div class="row" style="top:673px;left:82px"><span class="t">(––accent–primary);</span><span class="w"></span><span class="t">margin–bottom:</span><span class="w"></span><span class="t">1rem;</span><span class="w"></span><span class="t">}</span><span class="w"></span><span class="t">.tagline</span><span class="w"></span><span class="t">{</span><span class="w"></span></div><div class="row" style="top:715px;left:82px"><span class="t">font–size:</span><span class="w"></span><span class="t">1.5rem;</span><span class="w"></span><span class="t">color:</span><span class="w"></span><span class="t">var(––text–secondary);</span><span class="w"></span></div><div class="row" style="top:757px;left:82px"><span class="t">margin–bottom:</span><span class="w"></span><span class="t">2rem;</span><span class="w"></span><span class="t">}</span><span class="w"></span><span class="t">.features</span><span class="w"></span><span class="t">{</span><span class="w"></span><span class="t">background:</span><span class="w"></span><span class="t">var</span></div><div class="row" style="top:799px;left:82px"><span class="t">(––bg–secondary);</span><span class="w"></span><span class="t">border–radius:</span><span class="w"></span><span class="t">0.5rem;</span><span class="w"></span><span class="t">padding:</span><span class="w"></span><span class="t">1.5rem;</span><span class="w"></span></div><div class="row" style="top:841px;left:82px"><span class="t">margin:</span><span class="w"></span><span class="t">2rem</span><span class="w"></span><span class="t">0;</span><span class="w"></span><span class="t">border:</span><span class="w"></span><span class="t">1px</span><span class="w"></span><span class="t">solid</span><span class="w"></span><span class="t">var(––border–color);</span><span class="w"></span><span class="t">}</span><span class="w"></span><span class="t">.</span></div><div class="row" style="top:883px;left:82px"><span class="t">feature</span><span class="w"></span><span class="t">{</span><span class="w"></span><span class="t">margin–bottom:</span><span class="w"></span><span class="t">1.5rem;</span><span class="w"></span><span class="t">}</span><span class="w"></span><span class="t">.feature:last–child</span><span class="w"></span><span class="t">{</span><span class="w"></span></div><div class="row" style="top:925px;left:82px"><span class="t">margin–bottom:</span><span class="w"></span><span class="t">0;</span><span class="w"></span><span class="t">}</span><span class="w"></span><span class="t">.feature–title</span><span class="w"></span><span class="t">{</span><span class="w"></span><span class="t">font–weight:</span><span class="w"></span><span class="t">600;</span><span class="w"></span></div><div class="row" style="top:967px;left:82px"><span class="t">color:</span><span class="w"></span><span class="t">var(––accent–primary);</span><span class="w"></span><span class="t">margin–bottom:</span><span class="w"></span><span class="t">0.5rem;</span><span class="w"></span></div><div class="row" style="top:1009px;left:82px"><span class="t">display:</span><span class="w"></span><span class="t">flex;</span><span class="w"></span><span class="t">align–items:</span><span class="w"></span><span class="t">center;</span><span class="w"></span><span class="t">gap:</span><span class="w"></span><span class="t">0.5rem;</span><span class="w"></span><span class="t">}</span><span class="w"></span><span class="t">.privacy</span><span class="w"></span></div><div class="row" style="top:1051px;left:82px"><span class="t">{</span><span class="w"></span><span class="t">font–size:</span><span class="w"></span><span class="t">0.875rem;</span><span class="w"></span><span class="t">color:</span><span class="w"></span><span class="t">var(––text–muted);</span><span class="w"></span></div><div class="row" style="top:1093px;left:82px"><span class="t">margin–top:</span><span class="w"></span><span class="t">2rem;</span><span class="w"></span><span class="t">padding–top:</span><span class="w"></span><span class="t">1rem;</span><span class="w"></span><span class="t">border–top:</span><span class="w"></span><span class="t">1px</span><span class="w"></span><span class="t">solid</span><span class="w"></span></div><div class="row" style="top:1135px;left:82px"><span class="t">var(––border–color);</span><span class="w"></span><span class="t">}</span><span class="w"></span><span class="t">p</span><span class="w"></span><span class="t">{</span><span class="w"></span><span class="t">margin:</span><span class="w"></span><span class="t">0</span><span class="w"></span><span class="t">0</span><span class="w"></span><span class="t">1rem</span><span class="w"></span><span class="t">0;</span><span class="w"></span><span class="t">}</span><span class="w"></span></div><div class="row" style="top:1177px;left:82px"><span class="t">p:last–child</span><span class="w"></span><span class="t">{</span><span class="w"></span><span class="t">margin–bottom:</span><span class="w"></span><span class="t">0;</span><span class="w"></span><span class="t">}</span><span class="w"></span><span class="d">&lt;/</span><span class="k">style</span><span class="d">&gt;</span><span class="d">&lt;/</span></div><div class="row" style="top:1219px;left:82px"><span class="k">head</span><span class="d">&gt;</span><span class="d">&lt;</span><span class="k">body</span><span class="d">&gt;</span><span class="d">&lt;</span><span class="k">h1</span><span class="d">&gt;</span><span class="t">SelfDevKit</span><span class="d">&lt;/</span><span class="k">h1</span><span class="d">&gt;</span><span class="d">&lt;</span><span class="k">div</span><span class="w"></span></div><div class="row" style="top:1261px;left:82px"><span class="a">class</span><span class="d">=</span><span class="s">"tagline"</span><span class="d">&gt;</span><span class="t">All–in–one</span><span class="w"></span><span class="t">toolkit</span><span class="w"></span><span class="t">for</span><span class="w"></span><span class="t">developers</span><span class="d">&lt;/</span><span class="k">div</span><span class="d">&gt;</span><span class="d">&lt;</span><span class="k">p</span><span class="d">&gt;</span><span class="t">50</span></div><div class="row" style="top:1303px;left:82px"><span class="t">+</span><span class="w"></span><span class="t">essential</span><span class="w"></span><span class="t">tools</span><span class="w"></span><span class="t">in</span><span class="w"></span><span class="t">a</span><span class="w"></span><span class="t">single</span><span class="w"></span><span class="t">desktop</span><span class="w"></span><span class="t">app.</span><span class="w"></span><span class="t">Work</span><span class="w"></span><span class="t">offline,</span><span class="w"></span></div><div class="row" style="top:1345px;left:82px"><span class="t">keep</span><span class="w"></span><span class="t">your</span><span class="w"></span><span class="t">data</span><span class="w"></span><span class="t">private,</span><span class="w"></span><span class="t">and</span><span class="w"></span><span class="t">boost</span><span class="w"></span><span class="t">your</span><span class="w"></span><span class="t">productivity</span><span class="w"></span><span class="t">without</span><span class="w"></span></div><div class="row" style="top:1387px;left:82px"><span class="t">the</span><span class="w"></span><span class="t">browser</span><span class="w"></span><span class="t">tab</span><span class="w"></span><span class="t">chaos.</span><span class="d">&lt;/</span><span class="k">p</span><span class="d">&gt;</span><span class="d">&lt;</span><span class="k">div</span><span class="w"></span><span class="a">class</span><span class="d">=</span><span class="s">"features"</span><span class="d">&gt;</span><span class="d">&lt;</span><span class="k">div</span><span class="w"></span></div><div class="row" style="top:1429px;left:82px"><span class="a">class</span><span class="d">=</span><span class="s">"feature"</span><span class="d">&gt;</span><span class="d">&lt;</span><span class="k">div</span><span class="w"></span><span class="a">class</span><span class="d">=</span><span class="s">"feature–title"</span><span class="d">&gt;</span><span class="d">&lt;</span><span class="k">span</span><span class="d">&gt;</span><span class="t"><span class="emo"><svg width="37" height="42" viewBox="0 0 37 42" style="position:absolute;left:0;top:0"><path d="M10.2 17.5 V12.5 A9.2 8.3 0 0 1 28.6 12.5 V17.5" stroke="#c3cedb" stroke-width="2.6" fill="none"/><linearGradient id="lg" x1="0" y1="0" x2="1" y2="0"><stop offset="0" stop-color="#c9bc6e"/><stop offset="0.5" stop-color="#d6ca84"/><stop offset="1" stop-color="#b4a55a"/></linearGradient><rect x="6.2" y="16.8" width="26.3" height="18.2" rx="1.2" fill="url(#lg)"/><path d="M6.2 20 H32.5 M6.2 23 H32.5 M6.2 26 H32.5 M6.2 29 H32.5 M6.2 32 H32.5" stroke="#9f9150" stroke-width="0.7" opacity="0.5"/></svg></span></span><span class="d">&lt;/</span></div><div class="row" style="top:1471px;left:82px"><span class="k">span</span><span class="d">&gt;</span><span class="d">&lt;</span><span class="k">span</span><span class="d">&gt;</span><span class="t">Privacy</span><span class="w"></span><span class="t">First</span><span class="d">&lt;/</span><span class="k">span</span><span class="d">&gt;</span><span class="d">&lt;/</span><span class="k">div</span><span class="d">&gt;</span><span class="d">&lt;</span><span class="k">p</span><span class="d">&gt;</span><span class="t">Your</span><span class="w"></span><span class="t">code</span><span class="w"></span><span class="t">and</span><span class="w"></span><span class="t">data</span><span class="w"></span></div><div class="ovr"></div><div class="ovmark2" style="top:877px"></div></div></div>
<script>(function(){var w=window.innerWidth||2880;if(Math.abs(w-2880)>4){document.documentElement.style.zoom=(w/2880);}})();</script>
</body></html>
